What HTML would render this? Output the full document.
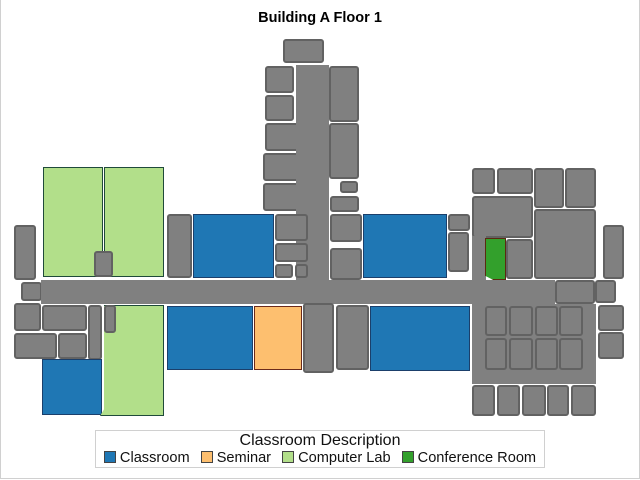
<!DOCTYPE html>
<html><head><meta charset="utf-8"><style>
body{margin:0;width:640px;height:480px;background:#fff;position:relative;overflow:hidden;font-family:"Liberation Sans",sans-serif}
.f{position:absolute;left:0;top:0;width:638px;height:478px;border-right:1px solid #d0d0d0;border-bottom:1px solid #d0d0d0;border-left:1px solid #d0d0d0}
.r{position:absolute;background:#808080;border:2px solid #626262;border-radius:3px;box-sizing:border-box}
.c{position:absolute;background:#808080;box-sizing:border-box}
.b{position:absolute;background:#1f77b4;border:1px solid #1b3f6b;box-sizing:border-box}
.g{position:absolute;background:#b2df8a;border:1px solid #1f4a3a;box-sizing:border-box}
.o{position:absolute;background:#fdbf6f;border:1px solid #6b2a1a;box-sizing:border-box}
.d{position:absolute;background:#33a02c;border:1px solid #5a2a10;box-sizing:border-box}
.t{position:absolute;top:10px;left:0;width:640px;text-align:center;font-weight:bold;font-size:14.5px}
.lg{position:absolute;left:95px;top:430px;width:450px;height:38px;border:1px solid #d0d0d0;box-sizing:border-box;text-align:center;color:#111}
.lg .h{margin-top:0px;line-height:19px;font-size:16px}
.lg .i{line-height:17px;font-size:14.6px;white-space:nowrap}
.sw{display:inline-block;width:10px;height:10px;border:1px solid #444;vertical-align:-1px;margin:0 4px 0 7px}
</style></head><body>
<div class="f"></div>
<div class="t">Building A Floor 1</div>
<div class="r" style="left:283px;top:39px;width:41px;height:24px"></div>
<div class="r" style="left:265px;top:66px;width:29px;height:27px"></div>
<div class="r" style="left:265px;top:95px;width:29px;height:26px"></div>
<div class="r" style="left:265px;top:123px;width:43px;height:28px"></div>
<div class="r" style="left:263px;top:153px;width:45px;height:28px"></div>
<div class="r" style="left:263px;top:183px;width:45px;height:28px"></div>
<div class="c" style="left:296px;top:65px;width:33px;height:215px"></div>
<div class="r" style="left:329px;top:66px;width:30px;height:56px"></div>
<div class="r" style="left:329px;top:123px;width:30px;height:56px"></div>
<div class="r" style="left:340px;top:181px;width:18px;height:12px"></div>
<div class="r" style="left:330px;top:196px;width:29px;height:16px"></div>
<div class="r" style="left:330px;top:214px;width:32px;height:28px"></div>
<div class="r" style="left:330px;top:248px;width:32px;height:32px"></div>
<div class="g" style="left:43px;top:167px;width:60px;height:110px"></div>
<div class="g" style="left:104px;top:167px;width:60px;height:110px"></div>
<div class="r" style="left:94px;top:251px;width:19px;height:26px"></div>
<div class="r" style="left:14px;top:225px;width:22px;height:55px"></div>
<div class="r" style="left:21px;top:282px;width:21px;height:19px"></div>
<div class="c" style="left:41px;top:280px;width:514px;height:24px"></div>
<div class="r" style="left:167px;top:214px;width:25px;height:64px"></div>
<div class="b" style="left:193px;top:214px;width:81px;height:64px"></div>
<div class="r" style="left:275px;top:214px;width:33px;height:27px"></div>
<div class="r" style="left:275px;top:243px;width:33px;height:19px"></div>
<div class="r" style="left:275px;top:264px;width:18px;height:14px"></div>
<div class="r" style="left:295px;top:264px;width:13px;height:14px"></div>
<div class="r" style="left:14px;top:303px;width:27px;height:28px"></div>
<div class="r" style="left:42px;top:305px;width:45px;height:26px"></div>
<div class="r" style="left:88px;top:305px;width:14px;height:55px"></div>
<div class="r" style="left:14px;top:333px;width:43px;height:26px"></div>
<div class="r" style="left:58px;top:333px;width:29px;height:26px"></div>
<div class="b" style="left:42px;top:359px;width:60px;height:56px"></div>
<div class="g" style="left:100px;top:305px;width:64px;height:111px;clip-path:polygon(4px 0,100% 0,100% 100%,0 100%,4px 94%,4px 0)"></div>
<div class="r" style="left:104px;top:305px;width:12px;height:28px"></div>
<div class="b" style="left:167px;top:306px;width:86px;height:64px"></div>
<div class="o" style="left:254px;top:306px;width:48px;height:64px"></div>
<div class="r" style="left:303px;top:303px;width:31px;height:70px"></div>
<div class="r" style="left:336px;top:305px;width:33px;height:65px"></div>
<div class="b" style="left:370px;top:306px;width:100px;height:65px"></div>
<div class="b" style="left:363px;top:214px;width:84px;height:64px"></div>
<div class="r" style="left:448px;top:214px;width:22px;height:17px"></div>
<div class="r" style="left:448px;top:232px;width:21px;height:40px"></div>
<div class="r" style="left:472px;top:168px;width:23px;height:26px"></div>
<div class="r" style="left:497px;top:168px;width:36px;height:26px"></div>
<div class="r" style="left:534px;top:168px;width:30px;height:40px"></div>
<div class="r" style="left:565px;top:168px;width:31px;height:40px"></div>
<div class="r" style="left:472px;top:196px;width:61px;height:42px"></div>
<div class="r" style="left:534px;top:209px;width:62px;height:70px"></div>
<div class="c" style="left:472px;top:236px;width:14px;height:45px"></div>
<div class="d" style="left:485px;top:238px;width:21px;height:42px;clip-path:polygon(0 0,100% 0,100% 100%,40% 100%,0 90%)"></div>
<div class="r" style="left:506px;top:239px;width:27px;height:40px"></div>
<div class="r" style="left:603px;top:225px;width:21px;height:54px"></div>
<div class="r" style="left:555px;top:280px;width:40px;height:24px"></div>
<div class="r" style="left:595px;top:280px;width:21px;height:23px"></div>
<div class="c" style="left:472px;top:304px;width:124px;height:80px"></div>
<div class="r" style="left:485px;top:306px;width:22px;height:30px"></div>
<div class="r" style="left:509px;top:306px;width:24px;height:30px"></div>
<div class="r" style="left:535px;top:306px;width:23px;height:30px"></div>
<div class="r" style="left:559px;top:306px;width:24px;height:30px"></div>
<div class="r" style="left:485px;top:338px;width:22px;height:32px"></div>
<div class="r" style="left:509px;top:338px;width:24px;height:32px"></div>
<div class="r" style="left:535px;top:338px;width:23px;height:32px"></div>
<div class="r" style="left:559px;top:338px;width:24px;height:32px"></div>
<div class="r" style="left:598px;top:305px;width:26px;height:26px"></div>
<div class="r" style="left:598px;top:332px;width:26px;height:27px"></div>
<div class="r" style="left:472px;top:385px;width:23px;height:31px"></div>
<div class="r" style="left:497px;top:385px;width:23px;height:31px"></div>
<div class="r" style="left:522px;top:385px;width:24px;height:31px"></div>
<div class="r" style="left:547px;top:385px;width:22px;height:31px"></div>
<div class="r" style="left:571px;top:385px;width:25px;height:31px"></div>
<div class="lg"><div class="h">Classroom Description</div>
<div class="i"><span class="sw" style="background:#1f77b4;margin-left:0"></span>Classroom <span class="sw" style="background:#fdbf6f"></span>Seminar <span class="sw" style="background:#b2df8a"></span>Computer Lab <span class="sw" style="background:#33a02c"></span>Conference Room</div></div>
</body></html>
